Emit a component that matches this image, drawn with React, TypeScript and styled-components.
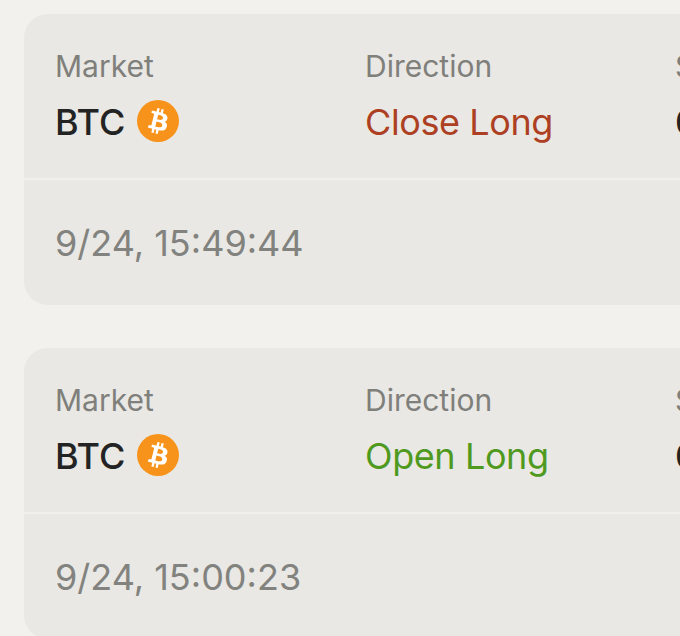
import React from "react";
import styled, { createGlobalStyle } from "styled-components";

const Global = createGlobalStyle`
  html, body { margin: 0; padding: 0; height: 100%; overflow: hidden; background: #f2f1ed; }
  body { font-family: Inter, "Liberation Sans", sans-serif; }
`;

const Page = styled.div`
  display: flex;
  flex-direction: column;
  gap: 43px;
  padding: 14px 0 0 24px;
  width: 1400px;
`;

const Card = styled.article`
  background: #e9e8e4;
  border-radius: 24px;
  width: 1300px;
  height: 291px;
  display: flex;
  flex-direction: column;
`;

const TopRow = styled.div`
  display: grid;
  grid-template-columns: repeat(4, 310px);
  height: 166px;
  padding: 32px 0 0 31px;
  box-sizing: border-box;
  border-bottom: 2px solid #f1f0ec;
`;

const Field = styled.div`
  display: flex;
  flex-direction: column;
  gap: 15px;
`;

const Label = styled.div`
  font-size: 30px;
  line-height: 40px;
  color: #7f7f7b;
`;

const Value = styled.div<{ $color?: string }>`
  display: flex;
  align-items: center;
  gap: 12px;
  font-size: 36px;
  line-height: 42px;
  font-weight: ${(p) => (p.$color ? 400 : 500)};
  letter-spacing: ${(p) => (p.$color ? "-0.4px" : "0")};
  color: ${(p) => p.$color ?? "#232323"};
`;

const BottomRow = styled.div`
  padding: 42px 31px 0;
  font-size: 36px;
  line-height: 42px;
  color: #82827e;
`;

const CoinIcon = styled.svg`
  flex: none;
  width: 42px;
  height: 42px;
  margin-top: -2px;
`;

const BitcoinIcon = () => (
  <CoinIcon viewBox="0 0 32 32" aria-hidden="true">
    <circle cx="16" cy="16" r="16" fill="#f7931a" />
    <path
      fill="#fff"
      d="M23.189 14.02c.314-2.096-1.283-3.223-3.465-3.975l.708-2.84-1.728-.43-.69 2.765c-.454-.114-.92-.22-1.385-.326l.695-2.783L15.596 6l-.708 2.839c-.376-.086-.746-.17-1.104-.26l.002-.009-2.384-.595-.46 1.846s1.283.294 1.256.312c.7.175.826.638.805 1.006l-.806 3.235c.048.012.11.03.18.057l-.183-.045-1.13 4.532c-.086.212-.303.531-.793.41.018.025-1.256-.313-1.256-.313l-.858 1.978 2.25.561c.418.105.828.215 1.231.318l-.715 2.872 1.727.43.708-2.84c.472.127.93.245 1.378.357l-.706 2.828 1.728.43.715-2.866c2.948.558 5.164.333 6.097-2.333.752-2.146-.037-3.385-1.588-4.192 1.13-.26 1.98-1.003 2.207-2.538zm-3.95 5.538c-.533 2.147-4.148.986-5.32.695l.95-3.805c1.172.293 4.929.872 4.37 3.11zm.535-5.569c-.487 1.953-3.495.96-4.47.717l.86-3.45c.975.243 4.118.696 3.61 2.733z"
    />
  </CoinIcon>
);

const trades = [
  { direction: "Close Long", color: "#ad4022", time: "9/24, 15:49:44" },
  { direction: "Open Long", color: "#4f9a1e", time: "9/24, 15:00:23" },
];

export default function App() {
  return (
    <>
      <Global />
      <Page>
        {trades.map((t) => (
          <Card key={t.time}>
            <TopRow>
              <Field>
                <Label>Market</Label>
                <Value>
                  BTC
                  <BitcoinIcon />
                </Value>
              </Field>
              <Field>
                <Label>Direction</Label>
                <Value $color={t.color}>{t.direction}</Value>
              </Field>
              <Field>
                <Label>Size</Label>
                <Value>0.0012</Value>
              </Field>
            </TopRow>
            <BottomRow>{t.time}</BottomRow>
          </Card>
        ))}
      </Page>
    </>
  );
}
